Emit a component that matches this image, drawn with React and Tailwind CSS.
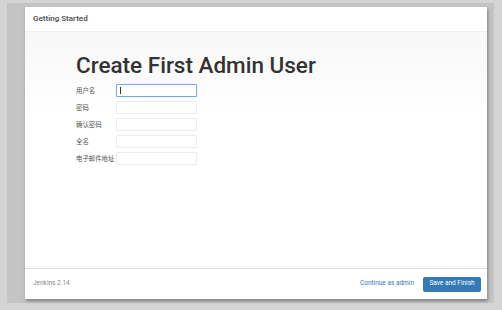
export default function App() {
  const fields = ["用户名", "密码", "确认密码", "全名", "电子邮件地址"];
  return (
    <div className="w-[502px] h-[310px] bg-[#d4d4d4] pt-[3px] pl-[7px] pr-[8px] pb-[7px]" style={{ fontFamily: "Roboto, 'Noto Sans CJK SC', sans-serif" }}>
      <div className="w-full h-full bg-[#c4c4c4] pt-[4px] pl-[18px] pr-[7px] pb-[4px]">
        <div className="w-[462px] h-[292px] bg-white flex flex-col shadow-[1px_2px_3px_rgba(0,0,0,0.35)]">
          <div className="h-[25px] flex items-center px-[8px] border-b border-[#f0f0f0]">
            <span className="text-[8px] font-semibold text-[#555]">Getting Started</span>
          </div>
          <div className="flex-1 bg-gradient-to-b from-[#f7f7f7] to-white to-[35%] pl-[51px] pt-[19px]">
            <h1 className="text-[22.5px] leading-[28px] font-medium text-[#333]">Create First Admin User</h1>
            <div className="mt-[5px] flex flex-col gap-[4px]">
              {fields.map((f, i) => (
                <div key={f} className="flex items-center h-[13px]">
                  <span className="w-[40px] text-[6.4px] text-[#555] whitespace-nowrap" style={{ fontFamily: "'Noto Sans CJK SC', sans-serif" }}>{f}</span>
                  <div className={"w-[81px] h-[13px] bg-white rounded-[1px] flex items-center pl-[3px] " + (i === 0 ? "border border-[#7fa9e0] shadow-[0_0_1px_#9ec0ee]" : "border border-[#ececec]")}>
                    {i === 0 && <div className="w-px h-[7px] bg-[#333]" />}
                  </div>
                </div>
              ))}
            </div>
          </div>
          <div className="h-[31px] border-t border-[#dddddd] flex items-center pl-[8px] pr-[6px]">
            <span className="text-[6.5px] text-[#888]">Jenkins 2.14</span>
            <span className="ml-auto text-[6.5px] text-[#3a77b8]">Continue as admin</span>
            <div className="ml-[9px] w-[58px] h-[15px] bg-[#337ab7] rounded-[2px] flex items-center justify-center">
              <span className="text-[6.5px] text-white">Save and Finish</span>
            </div>
          </div>
        </div>
      </div>
    </div>
  );
}
